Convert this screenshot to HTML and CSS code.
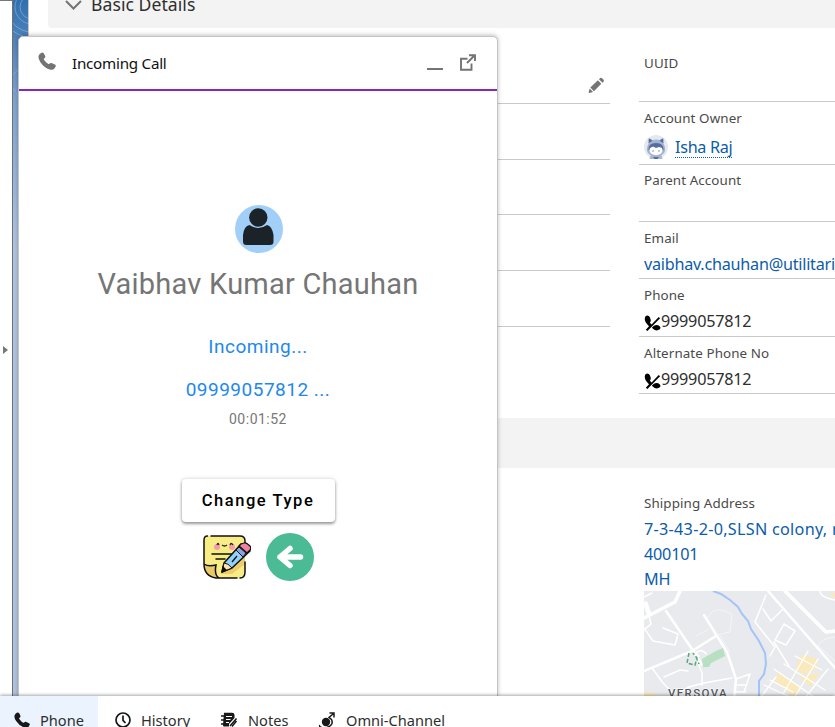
FILE: index.html
```html
<!DOCTYPE html>
<html lang="en">
<head>
<meta charset="utf-8">
<title>Account</title>
<link rel="stylesheet" href="styles.css">
</head>
<body>
<svg class="defs" width="0" height="0" aria-hidden="true">
  <symbol id="handset" viewBox="0 0 18 18"><path d="M1.500 2.200 3.100.9Q4.700 0 5.700 1.200L7.200 4.100Q7.600 5.300 6.600 6.100L5.700 6.900Q5.600 7.300 6.900 9Q8.600 11.200 10.400 12Q11 12.100 11.700 11.400Q12.500 10.700 13.400 11L16.900 12.600Q18.400 13.500 17.400 15L16.200 16.800Q14.700 18.400 11.800 17.500Q6 15.600 2.400 10.200Q-1 5 1.500 2.200Z"/></symbol>
  <symbol id="dial" viewBox="0 0 16 16"><path d="M.8 1.500Q3.500-.8 5.400 2.200L6.300 5Q6.300 6.500 5.400 7.800L7.100 9.500L14.200 2L15.600 3.200L2.900 16L1.300 14.800L4.500 11.200Q-1.200 6.500.8 1.500Z"/><path d="M7.300 12.700 9.400 10.700Q12.500 8.900 15.400 11.400Q16.600 13 15 14.600Q11.400 16.900 7.300 12.700Z"/></symbol>
</svg>
<div class="workspace">
  <aside class="rail"><span class="rail-toggle"></span></aside>
  <div class="backdrop">
    <svg width="15" height="727" viewBox="0 0 15 727"><g fill="none" stroke="#8fb4d6" stroke-opacity=".65"><circle cx="19" cy="7" r="17"/><circle cx="19" cy="7" r="12"/><circle cx="19" cy="7" r="25"/><path d="M0 75Q2 72 6 69M0 88Q4 92 6 99M0 31Q5 35 10 36"/></g></svg>
  </div>
  <main class="record">
    <h2 class="section-title">
      <svg width="17" height="10" viewBox="0 0 17 10"><path d="M1 1 8.500 8.500 16 1" fill="none" stroke="#747474" stroke-width="2"/></svg>
      <span>Basic Details</span>
    </h2>
    <div class="columns">
      <div class="col-left">
        <div class="row first"><svg width="17" height="17" viewBox="0 0 17 17" fill="#747474"><path d="M2.300 10.600 9.900 3.300 13.300 6.700 5.900 14.300ZM11 2.300 12.200 1.100Q13.200.5 14.200 1.400L15.400 2.600Q16.400 3.700 15.500 4.800L14.400 5.800ZM1.700 11.500 5 14.900 1.300 16Q.4 16 .7 15Z"/></svg></div>
        <div class="row r2"></div><div class="row r3"></div><div class="row r4"></div><div class="row r5"></div>
      </div>
      <div class="col-right">
        <div class="field uuid"><span class="label">UUID</span></div>
        <div class="field owner"><span class="label">Account Owner</span>
          <div class="value">
            <svg class="avatar" width="24" height="24" viewBox="0 0 24 24"><circle cx="12" cy="12" r="12" fill="#e5e8ed"/><path d="M5.500 24Q6 18 12 18T18.500 24Z" fill="#a9b8d3"/><path d="M4.800 3.500Q6.500 3.300 8 5Q12 4 16 5Q17.500 3.200 19.200 3.500L19.700 9Q22.500 14 20 18Q17 21.500 12 21.500T4 18Q1.500 14 4.400 9Z" fill="#a3b4d3"/><path d="M4.800 3.500Q7 3.500 8.300 6L4.700 8ZM19.200 3.500Q17 3.500 15.700 6L19.300 8Z" fill="#566d9e"/><path d="M4.500 15Q4 8 12 8T19.500 15L17 18H7Z" fill="#566d9e"/><ellipse cx="12" cy="15.300" rx="6.600" ry="4.900" fill="#fff"/><path d="M6 13Q8 9 12 10Q15 8.500 18 13L15 12L12 13L9 11.500Z" fill="#566d9e"/><g fill="#566d9e"><circle cx="9" cy="16" r=".7"/><circle cx="15" cy="16" r=".7"/><path d="M9 22H15L13.500 24H10.500Z"/></g></svg>
            <a class="owner-link">Isha Raj</a></div></div>
        <div class="field parent"><span class="label">Parent Account</span></div>
        <div class="field email"><span class="label">Email</span><div class="value"><a class="mail">vaibhav.chauhan@utilitari</a></div></div>
        <div class="field phone"><span class="label">Phone</span><div class="value"><svg class="dial" width="17" height="16"><use href="#dial"/></svg><span class="digits">9999057812</span></div></div>
        <div class="field phone last"><span class="label">Alternate Phone No</span><div class="value"><svg class="dial" width="17" height="16"><use href="#dial"/></svg><span class="digits">9999057812</span></div></div>
      </div>
    </div>
    <div class="section-band"></div>
    <div class="address">
      <span class="label">Shipping Address</span>
      <a class="address-lines"><span class="street">7-3-43-2-0,SLSN colony, r</span><br>400101<br>MH</a>
      <svg class="map" width="191" height="136" viewBox="0 0 191 136">
        <rect width="191" height="136" fill="#e8eaed"/>
        <g fill="none" stroke="#fff" stroke-linecap="round" stroke-linejoin="round">
          <path stroke-width="3.500" d="M0 27 31 11 36 0M6 24 2 12M141 0 175 34 182 41 191 40"/>
          <path stroke-width="2.500" d="M60 24 83 61 92 88 90 110M0 80 48 60 72 45M22 20 50 61 58 74M124 0 191 77"/>
          <path stroke-width="1.500" d="M0 6 8 2M0 37 9 50 31 54 34 43 19 37M5 24 7 33 0 39M8 77 19 92 31 104 45 96 60 92 88 87M50 61 58 82 58 94M55 65Q50 61 55 60T62 63M122 4 111 31 131 56 126 65M119 18 127 30 138 19M130 51 145 75M140 33 151 40 142 54 131 49ZM20 86 36 79 44 80M0 13 4 25M176 0Q176 6 191 9M92 88 106 83 100 101M91 94H103M91 101H102M90 107H100"/>
          <path stroke="#f5f5f6" d="M64 27Q68 17 78 19L88 23 86 41 73 44M75 43 86 61M191 46Q177 47 174 55L191 70M52 45 65 38"/>
        </g>
        <path d="M58 68 72 60 79 57 81 65 67 72 65 76 59 76Z" fill="#b7dfc2"/>
        <path d="M45 62 43 72 51 74 53 67 49 62M52 66 55 73" fill="none" stroke="#55a978" stroke-width="1.500" stroke-dasharray="4 2"/>
        <path d="M187 2H191V6H187ZM157 64 172 67 174 77 160 83 151 78ZM134 81 144 89 158 97 150 106 131 90ZM155 85 176 82 166 96ZM0 101 13 103V108H0Z" fill="#fae9bc"/>
        <g fill="none" stroke="#fff" stroke-width="1.300" stroke-linecap="round"><path d="M130 78 173 108M140 73 181 99M151 65 178 79M164 60 139 103M174 68 147 112M184 78 160 108M126 89 149 101M120 94 144 105M132 86 117 106"/></g>
        <path d="M69 0 77 3 86 9 94 16 98 23 104 30 107 38 115 50 121 62 122 73 120 83 115 90 115 106" fill="none" stroke="#a4c4f7" stroke-width="2"/>
        <text x="24" y="106" class="map-label">VERSOVA</text>
      </svg>
    </div>
  </main>
</div>
<section class="call">
  <header class="call-header">
    <svg width="18" height="18" fill="#747474"><use href="#handset"/></svg>
    <h1>Incoming Call</h1>
    <i class="minimise"></i>
    <svg class="popout" width="16" height="17" viewBox="0 0 16 17" fill="none" stroke="#747474" stroke-width="1.900"><path d="M7.500 4.800H1V15.800H11.500V9.500M9 1.200H15V7M14.500 1.500 7 9" /></svg>
  </header>
  <div class="call-body">
    <svg class="person" width="48" height="48" viewBox="0 0 48 48"><circle cx="24" cy="24" r="24" fill="#a1cff8"/><circle cx="23.300" cy="12.500" r="9.200" fill="#1b2329"/><path d="M14.500 20Q23.300 26 32 20Q37 21 38.500 30V36.500Q38.500 40 35 40H11.500Q8 40 8 36.500V30Q9 21 14.500 20Z" fill="#1b2329"/></svg>
    <div class="caller">Vaibhav Kumar Chauhan</div>
    <div class="status">Incoming...</div>
    <div class="number">09999057812 ...</div>
    <div class="timer">00:01:52</div>
    <button class="change">Change Type</button>
    <div class="actions">
      <svg width="48" height="48" viewBox="0 0 48 48"><path d="M4 3H37Q42 3 42 8V40Q42 45 37 45H17Q14 40 8 39Q1 37 1 30V6Q1 3 4 3Z" fill="#f8ed85"/><path d="M1 31Q5 34 13 32Q12 42 17 45H13Q1 44 1 31Z" fill="#e7c968"/><path d="M20 38 40 16 42 18V31L29 41H18Z" fill="#efcc6d"/><path d="M8 3H37Q42 3 42 8V12M42 29V39Q42 45 37 45M34 45H13Q1 43 1 31V7Q1 3 4.500 3M1 31Q5 34 13 32Q11 42 16 45M9 21H29M13 26H22" fill="none" stroke="#111" stroke-width="1.500" stroke-linecap="round"/><circle cx="14" cy="14" r="3" fill="#f69ab1"/><circle cx="29" cy="14" r="3" fill="#f69ab1"/><path d="M14 12Q15 9 16 12M19 12Q21.500 14 24 12M27 12Q28 9 30 12" fill="none" stroke="#222" stroke-width="1.300"/><path d="M19 39 21 30 38 11 47 18 29 35Z" fill="#91d1fb" stroke="#111" stroke-width="1.500" stroke-linejoin="round"/><path d="M36 13 38 11 41 10Q43 9 47 13Q49 16 46 18L44 20Z" fill="#ef829d" stroke="#111" stroke-width="1.300"/><path d="M36 14 43 20 40 24 33 17Z" fill="#8fa0df" stroke="#111"/><path d="M21 30Q25 30 29 35L19 39Z" fill="#ffe4ac" stroke="#111"/><path d="M20 34 23 37 19 39ZM29 29 34 23" fill="#111" stroke="#111" stroke-width="1.300"/></svg>
      <svg width="48" height="48" viewBox="0 0 48 48"><circle cx="24" cy="24" r="24" fill="#4bbb95"/><path d="M34.500 24H14M24 15.500 14 24 24 32.500" fill="none" stroke="#fff" stroke-width="5.500" stroke-linecap="round" stroke-linejoin="round"/></svg>
    </div>
  </div>
</section>
<footer class="utility">
  <div class="tab active"><svg width="16" height="16" fill="#181818"><use href="#handset"/></svg><span>Phone</span></div>
  <div class="tab history"><svg width="16" height="16" viewBox="0 0 16 16" fill="none" stroke="#181818" stroke-width="1.700"><circle cx="8" cy="8" r="7"/><path d="M8 3.500V8.300L10.500 11"/></svg><span>History</span></div>
  <div class="tab notes"><svg width="17" height="16" viewBox="0 0 17 16"><path d="M3 .8H11Q13.500.8 13.500 3V6L8 12V14.500H3Q2 14.500 2 13Z" fill="#181818"/><path d="M0 4H3M0 8H3M0 12H3" stroke="#181818" stroke-width="1.500"/><path d="M5 4.500H11M5 7.500H9.500M5 10.500H8" stroke="#fff"/><path d="M9 14 15.500 6.500M11 14.500 15.500 9" stroke="#181818" stroke-width="1.500"/></svg><span>Notes</span></div>
  <div class="tab omni"><svg width="17" height="16" viewBox="0 0 17 16"><circle cx="7" cy="10" r="4.200" fill="#181818"/><path d="M0 13Q1 16 5 16M8 15.500Q15 13 12.500 7.500L10 5.500L14 2M10.500 1H15V5.500" fill="none" stroke="#181818" stroke-width="1.500"/></svg><span>Omni-Channel</span></div>
</footer>
</body>
</html>
```
FILE: styles.css
```css
* { box-sizing: border-box; }
body { margin: 0; width: 835px; height: 727px; overflow: hidden; position: relative; background: #fff; font-family: "Noto Sans", "Open Sans", sans-serif; color: #2e2e2e; }
.defs { position: absolute; }
svg { display: block; flex: none; }
h1, h2 { margin: 0; font-weight: 400; }

.workspace { display: flex; height: 727px; }
.rail { width: 13px; flex: none; border-top: 1px solid #777; border-right: 1px solid #707070; padding: 345px 0 0 3px; }
.rail-toggle { display: block; width: 0; border-left: 5px solid #777; border-top: 4px solid transparent; border-bottom: 4px solid transparent; }
.backdrop { width: 16px; flex: none; border-right: 1px solid #c9c9c9; background: linear-gradient(#2f6fae 0, #5789c0 50px, #7fa4d0 100px, #b0c4e0 250px); overflow: hidden; }
.record { flex: 1; min-width: 0; overflow: hidden; }

.section-title { display: flex; align-items: flex-start; gap: 9px; height: 28px; margin-left: 19px; padding-left: 17px; background: #f3f3f3; border-radius: 0 0 0 4px; font-size: 17.600px; line-height: 24px; letter-spacing: .05px; }
.section-title span { margin-top: -8px; }
.columns { display: flex; gap: 29px; height: 390px; padding-left: 22px; }
.col-left { width: 559px; flex: none; }
.row { border-bottom: 1px solid #c9c9c9; height: 56px; }
.row.first { height: 76px; display: flex; justify-content: flex-end; padding: 49px 5px 0 0; }
.row.r3 { height: 55px; }
.col-right { flex: 1; min-width: 0; }
.field { border-bottom: 1px solid #c9c9c9; padding: 7px 0 0 5px; height: 57px; white-space: nowrap; overflow: hidden; }
.uuid { height: 74px; padding-top: 26px; }
.owner { height: 63px; }
.parent { padding-top: 6px; }
.phone { height: 58px; }
.last { height: 57px; }
.label { display: block; font-size: 13.400px; line-height: 18px; color: #4a4a4a; letter-spacing: .09px; }
.value { display: flex; align-items: center; height: 26px; margin-top: 4px; font-size: 16.200px; }
.owner .value { margin-top: 7px; gap: 7px; }
.owner-link { color: #0b5cab; border-bottom: 1px dotted #0b5cab; line-height: 20px; letter-spacing: -.3px; }
.mail { color: #0b5cab; letter-spacing: -.25px; }
.dial { margin-top: 4px; }
.digits { letter-spacing: -.22px; }
.section-band { height: 50px; background: #f3f3f3; }
.address { padding: 26px 0 0 615px; white-space: nowrap; }
.address-lines { display: block; color: #0b5cab; font-size: 16.200px; line-height: 25px; margin: 5px 0 -1px; letter-spacing: -.2px; }
.street { letter-spacing: .28px; }
.map-label { font: 500 11.500px Roboto, sans-serif; letter-spacing: 1.350px; fill: #555b61; stroke: #fff; stroke-width: 1px; paint-order: stroke; }

.call { position: absolute; left: 18px; top: 36px; width: 480px; height: 661px; background: #fff; border: 1px solid #c4c4c4; border-radius: 5px 5px 0 0; box-shadow: 0 -1px 4px rgba(0,0,0,.25); }
.call-header { display: flex; align-items: center; height: 54px; border-bottom: 2px solid #8329b9; padding: 0 21px 0 19px; }
.call-header > svg:first-child { margin-top: -4px; }
.call-header h1 { margin-left: 16px; flex: 1; font-size: 15.200px; line-height: 22px; color: #111; letter-spacing: -.25px; margin-top: -1px; }
.minimise { width: 16px; height: 2px; background: #747474; margin: 12px 17px 0 0; }
.popout { margin-top: -2px; }
.call-body { display: flex; flex-direction: column; align-items: center; padding-top: 114px; font-family: Roboto, sans-serif; white-space: nowrap; }
.person { margin-left: 2px; }
.caller { margin-top: 12px; font-size: 29px; line-height: 38px; color: #757575; letter-spacing: .23px; }
.status, .number { margin-top: 32px; font-size: 19px; line-height: 24px; color: #1e88f0; letter-spacing: .5px; }
.number { margin-top: 19px; }
.timer { margin-top: 9px; font-size: 14px; line-height: 16px; color: #777; letter-spacing: .5px; }
.change { margin-top: 52px; width: 153px; height: 43px; border: 0; border-radius: 4px; background: #fff; color: #000; font: 500 16.500px Roboto, sans-serif; letter-spacing: 1.550px; padding: 0; box-shadow: 0 2px 3px rgba(0,0,0,.35), 0 0 4px rgba(0,0,0,.18); }
.actions { display: flex; gap: 15px; margin-top: 11px; }

.utility { position: absolute; left: 0; top: 696px; width: 835px; height: 31px; overflow: hidden; display: flex; background: #fff; box-shadow: 0 -1px 3px rgba(0,0,0,.35); font-size: 14.600px; line-height: 20px; }
.tab { display: flex; align-items: flex-start; gap: 10px; padding: 16px 0 0 17px; height: 48px; flex: none; }
.tab span { margin-top: -2px; }
.active { width: 98px; background: #ebf4fe; padding-left: 14px; }
.history { width: 106px; }
.notes { width: 98px; }
```
